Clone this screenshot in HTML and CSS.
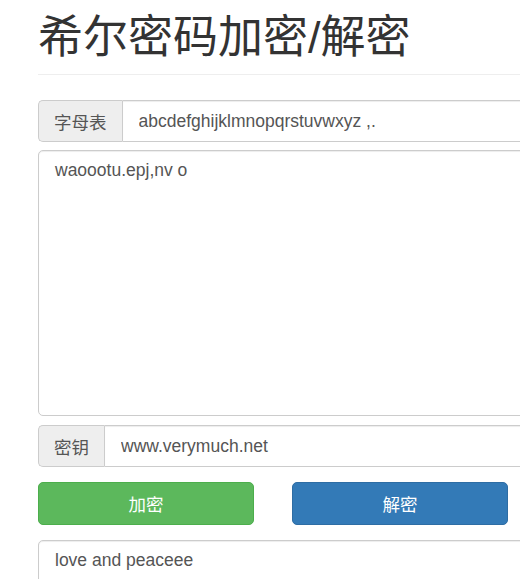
FILE: index.html
```html
<!DOCTYPE html>
<html lang="zh-CN">
<head>
<meta charset="utf-8">
<title>希尔密码加密/解密</title>
<link rel="stylesheet" href="styles.css">
</head>
<body>
<div class="page">
  <div class="page-header">
    <h1>希尔密码加密/解密</h1>
  </div>
  <div class="form">
    <div class="input-group group-alpha">
      <span class="addon">字母表</span>
      <input class="control" type="text" value="abcdefghijklmnopqrstuvwxyz ,.">
    </div>
    <textarea class="control area area-input">waoootu.epj,nv o</textarea>
    <div class="input-group group-key">
      <span class="addon">密钥</span>
      <input class="control" type="text" value="www.verymuch.net">
    </div>
    <div class="buttons">
      <button class="btn btn-success" type="button">加密</button>
      <button class="btn btn-primary" type="button">解密</button>
    </div>
    <textarea class="control area area-output">love and peaceee</textarea>
  </div>
</div>
</body>
</html>
```

FILE: styles.css
```css
html, body {
  margin: 0;
  padding: 0;
  overflow: hidden;
  background: #fff;
}

body {
  font-family: "Liberation Sans", Arial, "Noto Sans CJK SC", sans-serif;
  color: #333;
}

.page {
  padding-left: 38px;
  width: 700px;
}

.page-header {
  height: 75px;
  border-bottom: 1px solid #eee;
  box-sizing: border-box;
  display: flex;
  align-items: flex-start;
}

.page-header h1 {
  margin: 0;
  padding-top: 13px;
  font-size: 45px;
  line-height: 49px;
  font-weight: 400;
  color: #333;
  font-family: "Liberation Sans", Arial, "Noto Sans CJK SC", sans-serif;
}

.form {
  display: flex;
  flex-direction: column;
  padding-top: 25px;
}

.input-group {
  display: flex;
  height: 42px;
}

.group-alpha { margin-bottom: 8px; }
.group-key { margin-bottom: 15px; }

.addon {
  display: flex;
  align-items: center;
  padding: 0 15px;
  background: #eee;
  border: 1px solid #ccc;
  border-right: 0;
  border-radius: 5px 0 0 5px;
  color: #555;
  font-size: 17.5px;
  font-family: "Noto Sans CJK SC", sans-serif;
}

.control {
  font-family: "Liberation Sans", Arial, "Noto Sans CJK SC", sans-serif;
  font-size: 17.5px;
  color: #555;
  border: 1px solid #ccc;
  background: #fff;
  box-shadow: inset 0 1px 1px rgba(0, 0, 0, 0.075);
  outline: none;
  box-sizing: border-box;
  margin: 0;
}

.input-group .control {
  flex: 1;
  height: 42px;
  padding: 0 16px;
  border-radius: 0 5px 5px 0;
}

.area {
  width: 100%;
  padding: 7px 16px;
  line-height: 25px;
  border-radius: 5px;
  resize: none;
}

.area-input {
  height: 266px;
  margin-bottom: 9px;
}

.area-output {
  height: 120px;
}

.buttons {
  display: grid;
  grid-template-columns: 216px 216px;
  column-gap: 38px;
  margin-bottom: 15px;
}

.btn {
  height: 43px;
  border-radius: 5px;
  border: 1px solid transparent;
  color: #fff;
  font-size: 17.5px;
  font-family: "Noto Sans CJK SC", sans-serif;
  padding: 0;
  cursor: pointer;
}

.btn-success {
  background: #5cb85c;
  border-color: #4cae4c;
}

.btn-primary {
  background: #337ab7;
  border-color: #2e6da4;
}
```
